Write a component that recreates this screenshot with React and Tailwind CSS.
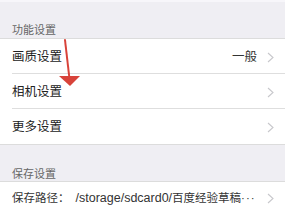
const Chevron = () => (
  <svg width="7" height="11" viewBox="0 0 7 11" className="shrink-0">
    <polyline points="1,1 6,5.5 1,10" fill="none" stroke="#c8c8cc" strokeWidth="1.1" />
  </svg>
);

const Row = ({ label, value, last }) => (
  <div className="flex h-[35px] items-center pl-3">
    <div className={`flex h-full flex-1 items-center pr-[11px] pt-[2px] ${last ? "" : "border-b border-[#dedede]"}`}>
      <span className="flex-1 text-[12.5px] text-[#222]">{label}</span>
      {value && <span className="mr-[10px] text-[12.5px] text-[#333]">{value}</span>}
      <Chevron />
    </div>
  </div>
);

export default function App() {
  return (
    <div
      className="relative h-[214px] w-[285px] overflow-hidden bg-[#efeef3]"
      style={{ fontFamily: '"Liberation Sans", "Noto Sans CJK SC", sans-serif' }}
    >
      <div className="h-[2px] bg-[#f7f6fa]" />
      <div className="h-[36px] pl-3 pt-[21px] text-[11px] leading-[14px] text-[#666]">功能设置</div>
      <div className="border-y border-[#dcdcdc] bg-white">
        <Row label="画质设置" value="一般" />
        <Row label="相机设置" />
        <Row label="更多设置" last />
      </div>
      <div className="h-[36px] pl-3 pt-[22px] text-[11px] leading-[14px] text-[#666]">保存设置</div>
      <div className="border-y border-[#dcdcdc] bg-white">
        <div className="flex h-[33px] items-center pl-3 pr-[11px]">
          <span className="min-w-0 flex-1 overflow-hidden whitespace-nowrap text-[11.5px] text-[#333]">
            保存路径：<span className="ml-[6px] text-[12.5px]">/storage/sdcard0/</span>百度经验草稿
            <span className="tracking-[1px]">···</span>
          </span>
          <span className="ml-[4px]">
            <Chevron />
          </span>
        </div>
      </div>
      <svg className="absolute left-0 top-0" width="285" height="214" viewBox="0 0 285 214">
        <line x1="65" y1="40" x2="69.5" y2="79" stroke="#d8433a" strokeWidth="2" strokeLinecap="round" />
        <polygon points="59,76 80,76 70,86" fill="#d8433a" />
      </svg>
    </div>
  );
}
